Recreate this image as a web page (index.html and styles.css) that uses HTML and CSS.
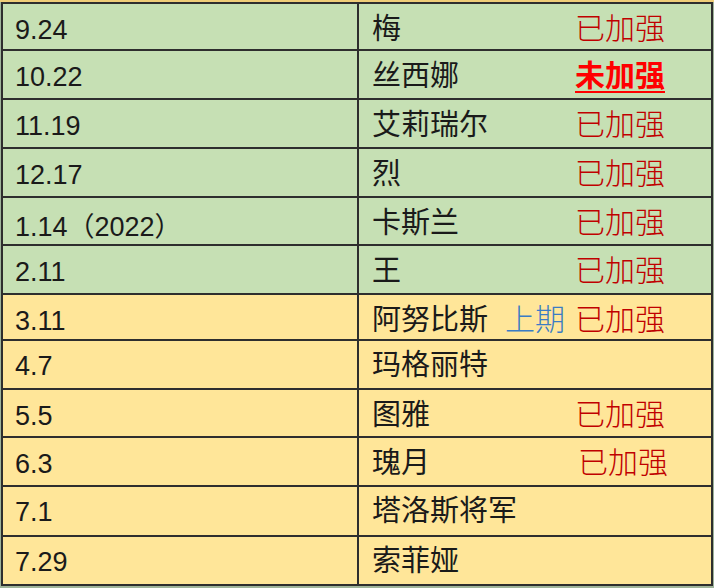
FILE: index.html
```html
<!DOCTYPE html>
<html lang="zh">
<head>
<meta charset="utf-8">
<link rel="stylesheet" href="styles.css">
</head>
<body>
<div class="prev-row"></div>
<div class="sheet">
  <div class="row green h49"><div class="date">9.24</div><div class="name"><span>梅</span><span class="status">已加强</span></div></div>
  <div class="row green h49"><div class="date">10.22</div><div class="name"><span>丝西娜</span><span class="status weak">未加强</span></div></div>
  <div class="row green h49"><div class="date">11.19</div><div class="name"><span>艾莉瑞尔</span><span class="status">已加强</span></div></div>
  <div class="row green h49"><div class="date">12.17</div><div class="name"><span>烈</span><span class="status">已加强</span></div></div>
  <div class="row green h48"><div class="date">1.14（2022）</div><div class="name"><span>卡斯兰</span><span class="status">已加强</span></div></div>
  <div class="row green h49"><div class="date">2.11</div><div class="name"><span>王</span><span class="status">已加强</span></div></div>
  <div class="row yellow h46"><div class="date">3.11</div><div class="name"><span>阿努比斯</span><span class="group"><span class="prev">上期</span><span class="status">已加强</span></span></div></div>
  <div class="row yellow h49"><div class="date">4.7</div><div class="name"><span>玛格丽特</span></div></div>
  <div class="row yellow h48"><div class="date">5.5</div><div class="name"><span>图雅</span><span class="status">已加强</span></div></div>
  <div class="row yellow h49"><div class="date">6.3</div><div class="name"><span>瑰月</span><span class="status shift">已加强</span></div></div>
  <div class="row yellow h50"><div class="date">7.1</div><div class="name"><span>塔洛斯将军</span></div></div>
  <div class="row yellow h49"><div class="date">7.29</div><div class="name"><span>索菲娅</span></div></div>
</div>
</body>
</html>
```

FILE: styles.css
```css
html, body {
  margin: 0;
  padding: 0;
}
body {
  width: 714px;
  height: 588px;
  background: #9fb49a;
  overflow: hidden;
}
.prev-row {
  height: 2px;
  background: #efcd78;
}
.sheet {
  margin-left: 1px;
  width: 712px;
  box-sizing: border-box;
  border-top: 2px solid #2e2e2e;
  border-left: 2px solid #2e2e2e;
  border-right: 2px solid #2e2e2e;
}
.row {
  display: grid;
  grid-template-columns: 356px 1fr;
  box-sizing: border-box;
  border-bottom: 2px solid #2e2e2e;
}
.h46 { height: 46px; }
.h48 { height: 48px; }
.h49 { height: 49px; }
.h50 { height: 50px; }
.row:first-child.h49 { height: 47px; }
.green { background: #c6e0b4; }
.yellow { background: #ffe699; }
.date {
  border-right: 2px solid #2e2e2e;
  display: flex;
  align-items: center;
  padding-left: 12px;
  padding-top: 2px;
  font-family: "Liberation Sans", "Noto Sans CJK SC", sans-serif;
  font-size: 27px;
  color: #1a1a1a;
}
.name {
  display: flex;
  align-items: center;
  justify-content: space-between;
  padding-left: 13px;
  padding-right: 46px;
  padding-bottom: 6px;
  font-family: "Noto Sans CJK SC", "Liberation Sans", sans-serif;
  font-size: 29px;
  color: #1a1a1a;
}
.status {
  color: #c00000;
  font-weight: 300;
  font-size: 30px;
}
.status.weak {
  color: #ff0000;
  font-weight: 700;
  text-decoration: underline;
  text-decoration-thickness: 2px;
  text-underline-offset: 5px;
}
.status.shift {
  margin-right: -3px;
}
.group {
  display: flex;
  gap: 10px;
}
.prev {
  color: #3a7cc4;
  font-weight: 300;
  font-size: 30px;
}
```
